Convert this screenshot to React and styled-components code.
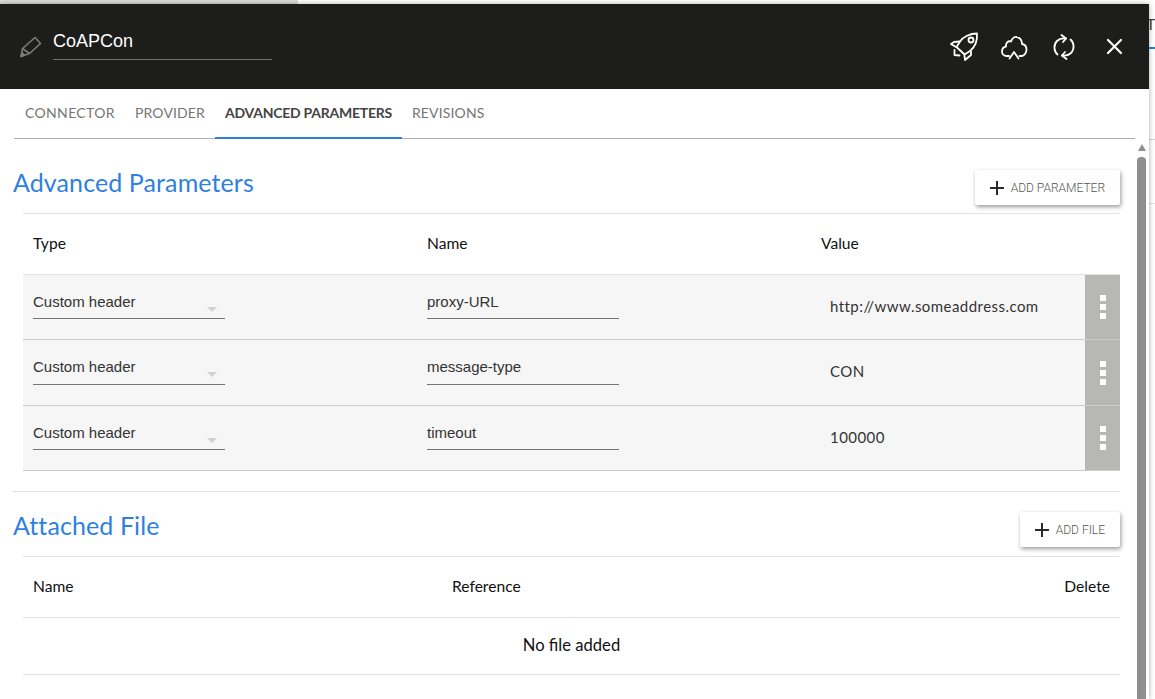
import React from 'react';
import styled, { createGlobalStyle } from 'styled-components';

const Global = createGlobalStyle`
  html, body {
    margin: 0;
    padding: 0;
    background: #fff;
    overflow: hidden;
  }
  * {
    box-sizing: border-box;
  }
`;

const Page = styled.div`
  position: relative;
  width: 1155px;
  height: 699px;
  overflow: hidden;
  background: #fff;
  font-family: 'Liberation Sans', Arial, sans-serif;
`;

const TopStrip = styled.div`
  position: absolute;
  top: 0;
  left: 0;
  width: 298px;
  height: 4px;
  background: #dcdcdc;
`;

const BehindGlyph = styled.span`
  position: absolute;
  top: 14px;
  left: 1146px;
  font: 400 16px 'Lato', sans-serif;
  color: #444;
`;

const BehindLine = styled.div`
  position: absolute;
  left: 1149px;
  width: 6px;
  top: ${p => p.$top}px;
  height: ${p => p.$h || 1}px;
  background: ${p => p.$color};
`;

const Modal = styled.div`
  position: absolute;
  top: 4px;
  left: 0;
  width: 1149px;
  height: 695px;
  background: #fff;
  box-shadow: 0 0 5px rgba(0, 0, 0, 0.35);
  display: flex;
  flex-direction: column;
`;

const Header = styled.header`
  height: 85px;
  flex: none;
  background: #1d1d1b;
  display: flex;
  align-items: flex-start;
  padding: 0 20px;
`;

const EditGroup = styled.div`
  display: flex;
  align-items: flex-start;
  padding-top: 32px;
  flex: 1;
`;

const TitleField = styled.div`
  width: 219px;
  height: 30px;
  margin: -6px 0 0 11px;
  color: #fff;
  font-size: 18px;
  line-height: 22px;
  border-bottom: 1px solid #6f6f6f;
`;

const Actions = styled.div`
  display: flex;
  align-items: center;
  gap: 20px;
  padding-top: 27px;
`;

const ActionIcon = styled.svg`
  width: 30px;
  height: 30px;
  fill: none;
  stroke: #fff;
  stroke-width: ${p => p.$sw || 1.8};
  stroke-linecap: round;
  stroke-linejoin: round;
  display: block;
`;

const Tabs = styled.nav`
  height: 50px;
  flex: none;
  margin: 0 14px;
  display: flex;
  border-bottom: 1px solid #b0b0b0;
`;

const Tab = styled.div`
  height: 50px;
  padding: 0 10px 0 ${p => p.$first ? 11 : 10}px;
  font: ${p => p.$active ? 700 : 400} 14px/48px 'Lato', sans-serif;
  letter-spacing: ${p => p.$active ? '-0.25px' : p.$first ? '0.35px' : '0.15px'};
  color: ${p => p.$active ? '#444' : '#757575'};
  border-bottom: 2px solid ${p => p.$active ? '#2f7fe0' : 'transparent'};
`;

const Body = styled.div`
  flex: 1;
  min-height: 0;
  display: flex;
  overflow: hidden;
`;

const Content = styled.main`
  width: 1120px;
  flex: none;
  padding-left: 13px;
`;

const SectionHead = styled.div`
  display: flex;
  justify-content: space-between;
  align-items: flex-start;
  height: ${p => p.$h}px;
  padding-top: ${p => p.$pt}px;
`;

const SectionTitle = styled.h2`
  margin: ${p => p.$mt}px 0 0;
  font: 400 25px/30px 'Lato', sans-serif;
  letter-spacing: 0.1px;
  color: #2f7fe0;
`;

const AddButton = styled.button`
  display: flex;
  align-items: center;
  height: 35px;
  padding: 0 15px 0 14px;
  background: #fff;
  border: 0;
  border-radius: 2px;
  box-shadow: 1px 2px 4px rgba(0, 0, 0, 0.4);
  font: 300 12px 'Roboto', sans-serif;
  color: #555;
  svg {
    margin-right: 6px;
  }
`;

const Table = styled.div`
  margin-left: 10px;
  border-top: 1px solid #e2e2e2;
`;

const HeadRow = styled.div`
  display: grid;
  grid-template-columns: ${p => p.$cols};
  height: 61px;
  align-items: center;
  padding: 0 0 2px 10px;
  border-bottom: 1px solid #e2e2e2;
  font: 400 15.6px 'Lato', sans-serif;
  color: #111;
`;

const RightCell = styled.div`
  text-align: right;
  padding-right: 10px;
`;

const ParamRow = styled.div`
  display: grid;
  grid-template-columns: 394px 394px 1fr 35px;
  height: ${p => p.$h}px;
  padding-left: 10px;
  background: #f6f6f6;
  border-bottom: 1px solid #cccccc;
`;

const Field = styled.div`
  position: relative;
  width: 192px;
  height: ${p => p.$h}px;
  padding-top: 18px;
  font: 400 15px/18px 'Liberation Sans', Arial, sans-serif;
  color: #333;
  border-bottom: 1px solid #757575;
`;

const Caret = styled.span`
  position: absolute;
  right: 8px;
  top: 32px;
  width: 0;
  height: 0;
  border-left: 5px solid transparent;
  border-right: 5px solid transparent;
  border-top: 5px solid #d2d2d2;
`;

const ValueCell = styled.div`
  padding: 21px 0 0 9px;
  font: 400 15px/20px 'Lato', sans-serif;
  letter-spacing: 0.45px;
  color: #333;
`;

const MenuCell = styled.div`
  background: #b7b7b5;
  display: flex;
  flex-direction: column;
  align-items: center;
  justify-content: center;
  gap: 3px;
  i {
    display: block;
    width: 6px;
    height: 6px;
    background: #fff;
  }
`;

const Divider = styled.div`
  height: 1px;
  margin-top: 20px;
  background: #e2e2e2;
`;

const EmptyRow = styled.div`
  height: 57px;
  border-bottom: 1px solid #e2e2e2;
  text-align: center;
  font: 400 16.6px/54px 'Lato', sans-serif;
  color: #111;
`;

const Scrollbar = styled.div`
  margin-left: 17px;
  width: 9px;
  display: flex;
  flex-direction: column;
  align-items: center;
`;

const ScrollUp = styled.div`
  margin-top: 5px;
  width: 0;
  height: 0;
  border-left: 4.5px solid transparent;
  border-right: 4.5px solid transparent;
  border-bottom: 7px solid #8f8f8f;
`;

const ScrollThumb = styled.div`
  margin-top: 6px;
  width: 9px;
  flex: 1;
  background: #8f8f8f;
  border-radius: 4px 4px 0 0;
`;

const PencilIcon = () => (
  <svg width="22" height="22" viewBox="0 0 22 22" fill="none" stroke="#7c7c7c" strokeWidth="1.6" strokeLinejoin="round">
    <path d="M1 20.500L2.500 12.500 15 1.500l5.500 6-11 10z" />
    <path d="M2.500 12.500l7 5" />
    <path d="M1 20.500l3.500-1.500-2-2z" fill="#7c7c7c" />
  </svg>
);

const RocketIcon = () => (
  <ActionIcon viewBox="0 0 30 30">
    <path d="M28 2.500C21 2.500 14 6 11 10.500L7.500 16l8 7.500L21 20c5-4 7.500-10 7-17.500z" />
    <circle cx="22" cy="9" r="2.500" />
    <path d="M10.500 10.500L5 11l-3 2 5 3" />
    <path d="M5.500 19v5l5 .5" />
    <path d="M22 20.500V24l-6 5-.5-4.500" />
  </ActionIcon>
);

const CloudIcon = () => (
  <ActionIcon viewBox="0 0 30 30">
    <path d="M10 25H7.500c-2.500 0-4.500-2-4.500-4.500S4.500 16 7 15.500c-.5-3.500 2-6 5-5 1-3 3.500-5 6-4.500 3 .5 5 3.500 5 7 3 .5 4.500 3 4.500 5.500 0 3-2 6-4.500 6.500h-2.500" />
    <path d="M10.500 27.500l4.500-6.500 4.500 6.500" />
  </ActionIcon>
);

const SyncIcon = () => (
  <ActionIcon viewBox="0 0 30 30">
    <path d="M8.500 23.500C4.500 20 4.500 13.500 8 10c2.500-2.500 5.500-3 9-2.500" />
    <path d="M12.500 4l4.500 3.500-3 3.500" />
    <path d="M21.500 8.500c4 3.500 4 10 .5 13.500-2.500 2.500-5.500 3-9 2.500" />
    <path d="M17.500 28L13 24.500l3-3.500" />
  </ActionIcon>
);

const CloseIcon = () => (
  <ActionIcon viewBox="0 0 30 30" $sw={2.2}>
    <path d="M9 9l13 13M22 9L9 22" />
  </ActionIcon>
);

const PlusIcon = () => (
  <svg width="16" height="16" viewBox="0 0 16 16" stroke="#2a2a2a" strokeWidth="2">
    <path d="M8 1v14M1 8h14" />
  </svg>
);

const params = [
  { name: 'proxy-URL', value: 'http://www.someaddress.com', h: 65, fieldH: 44 },
  { name: 'message-type', value: 'CON', h: 66, fieldH: 45 },
  { name: 'timeout', value: '100000', h: 65, fieldH: 44 },
];

export default function App() {
  return (
    <Page>
      <Global />
      <TopStrip />
      <BehindGlyph>T</BehindGlyph>
      <BehindLine $top={47} $h={2} $color="#2f7fe0" />
      <BehindLine $top={139} $color="#d5d5d5" />
      <BehindLine $top={203} $color="#e2e2e2" />
      <Modal>
        <Header>
          <EditGroup>
            <PencilIcon />
            <TitleField>CoAPCon</TitleField>
          </EditGroup>
          <Actions>
            <RocketIcon />
            <CloudIcon />
            <SyncIcon />
            <CloseIcon />
          </Actions>
        </Header>
        <Tabs>
          <Tab $first>CONNECTOR</Tab>
          <Tab>PROVIDER</Tab>
          <Tab $active>ADVANCED PARAMETERS</Tab>
          <Tab>REVISIONS</Tab>
        </Tabs>
        <Body>
          <Content>
            <SectionHead $h={74} $pt={31}>
              <SectionTitle $mt={-3}>Advanced Parameters</SectionTitle>
              <AddButton><PlusIcon />ADD PARAMETER</AddButton>
            </SectionHead>
            <Table>
              <HeadRow $cols="394px 394px 1fr">
                <div>Type</div>
                <div>Name</div>
                <div>Value</div>
              </HeadRow>
              {params.map(p => (
                <ParamRow key={p.name} $h={p.h}>
                  <Field $h={p.fieldH}>Custom header<Caret /></Field>
                  <Field $h={p.fieldH}>{p.name}</Field>
                  <ValueCell>{p.value}</ValueCell>
                  <MenuCell><i /><i /><i /></MenuCell>
                </ParamRow>
              ))}
            </Table>
            <Divider />
            <SectionHead $h={64} $pt={20}>
              <SectionTitle $mt={-2}>Attached File</SectionTitle>
              <AddButton><PlusIcon />ADD FILE</AddButton>
            </SectionHead>
            <Table>
              <HeadRow $cols="419px 1fr 200px">
                <div>Name</div>
                <div>Reference</div>
                <RightCell>Delete</RightCell>
              </HeadRow>
              <EmptyRow>No file added</EmptyRow>
            </Table>
          </Content>
          <Scrollbar>
            <ScrollUp />
            <ScrollThumb />
          </Scrollbar>
        </Body>
      </Modal>
    </Page>
  );
}
